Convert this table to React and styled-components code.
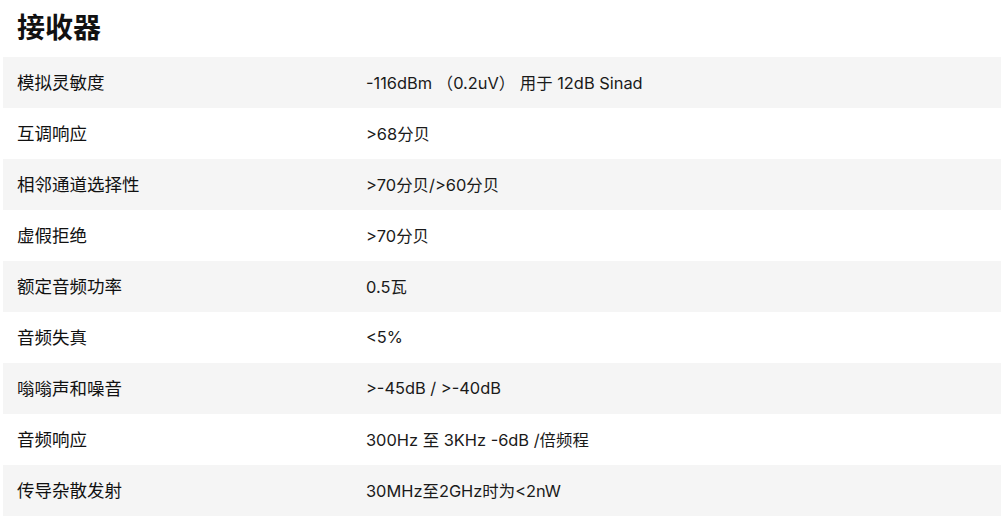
import React from "react";
import styled, { createGlobalStyle } from "styled-components";

const Global = createGlobalStyle`
  html, body { margin: 0; padding: 0; background: #fff; }
  body { font-family: "Noto Sans CJK SC", "Noto Sans", sans-serif; color: #1a1a1a; overflow: hidden; }
`;

const Page = styled.div`
  padding: 0 0 0 3px;
`;

const Title = styled.h2`
  margin: 0;
  height: 57px;
  box-sizing: border-box;
  padding: 6px 0 0 14px;
  font-size: 28px;
  line-height: 40px;
  font-weight: 700;
  font-family: "Noto Sans CJK SC", sans-serif;
  color: #111;
`;

const Table = styled.div`
  display: grid;
  grid-template-columns: 349px 1fr;
`;

const Row = styled.div`
  display: contents;
`;

const Cell = styled.div`
  height: 51px;
  box-sizing: border-box;
  display: flex;
  align-items: center;
  padding: 0 0 2px 14px;
  background: ${(p) => (p.$shade ? "#f5f5f5" : "#fff")};
`;

const Label = styled(Cell)`
  font-size: 17.5px;
  font-family: "Noto Sans CJK SC", sans-serif;
  color: #111;
`;

const Value = styled(Cell)`
  font-size: 16.4px;
  font-family: "Inter", "Noto Sans CJK SC", sans-serif;
  color: #1a1a1a;
`;

const rows = [
  ["模拟灵敏度", "-116dBm （0.2uV） 用于 12dB Sinad"],
  ["互调响应", ">68分贝"],
  ["相邻通道选择性", ">70分贝/>60分贝"],
  ["虚假拒绝", ">70分贝"],
  ["额定音频功率", "0.5瓦"],
  ["音频失真", "<5%"],
  ["嗡嗡声和噪音", ">-45dB / >-40dB"],
  ["音频响应", "300Hz 至 3KHz -6dB /倍频程"],
  ["传导杂散发射", "30MHz至2GHz时为<2nW"],
];

export default function App() {
  return (
    <Page>
      <Global />
      <Title>接收器</Title>
      <Table>
        {rows.map(([k, v], i) => (
          <Row key={k}>
            <Label $shade={i % 2 === 0}>{k}</Label>
            <Value $shade={i % 2 === 0}>{v}</Value>
          </Row>
        ))}
      </Table>
    </Page>
  );
}
